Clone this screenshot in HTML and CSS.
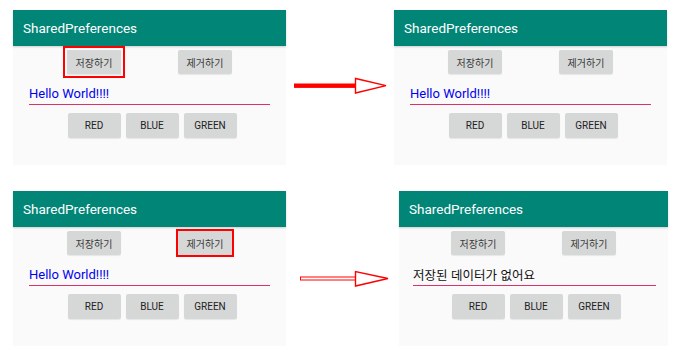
FILE: index.html
```html
<!DOCTYPE html>
<html lang="ko">
<head>
	<meta charset="utf-8" />
	<title>SharedPreferences</title>
	<link rel="stylesheet" href="styles.css">
</head>
<body>
<div class="row">
	<div class="panel">
		<div class="appbar">SharedPreferences</div>
		<div class="actions">
			<button class="btn marked">저장하기</button>
			<button class="btn">제거하기</button>
		</div>
		<div class="field blue">Hello World!!!!</div>
		<div class="colors">
			<button class="cbtn">RED</button>
			<button class="cbtn">BLUE</button>
			<button class="cbtn">GREEN</button>
		</div>
	</div>
	<div class="arrow first">
		<svg width="94" height="18" viewBox="0 0 94 18">
			<rect x="0" y="6.5" width="62" height="4.4" fill="#f00"/>
			<polygon points="61.5,1.5 61.5,16 92,8.6" fill="#fff" stroke="#f00" stroke-width="1.4"/>
		</svg>
	</div>
	<div class="panel">
		<div class="appbar">SharedPreferences</div>
		<div class="actions">
			<button class="btn">저장하기</button>
			<button class="btn">제거하기</button>
		</div>
		<div class="field blue">Hello World!!!!</div>
		<div class="colors">
			<button class="cbtn">RED</button>
			<button class="cbtn">BLUE</button>
			<button class="cbtn">GREEN</button>
		</div>
	</div>
</div>

<div class="row">
	<div class="panel">
		<div class="appbar">SharedPreferences</div>
		<div class="actions">
			<button class="btn">저장하기</button>
			<button class="btn marked tight">제거하기</button>
		</div>
		<div class="field blue">Hello World!!!!</div>
		<div class="colors">
			<button class="cbtn">RED</button>
			<button class="cbtn">BLUE</button>
			<button class="cbtn">GREEN</button>
		</div>
	</div>
	<div class="arrow second">
		<svg width="90" height="18" viewBox="0 0 90 18">
			<rect x="0.5" y="7" width="55" height="3" fill="#fff" stroke="#f00" stroke-width="1"/>
			<polygon points="55.5,1.5 55.5,16 88,8.5" fill="#fff" stroke="#f00" stroke-width="1.4"/>
		</svg>
	</div>
	<div class="panel narrow">
		<div class="appbar">SharedPreferences</div>
		<div class="actions">
			<button class="btn">저장하기</button>
			<button class="btn">제거하기</button>
		</div>
		<div class="field dark">저장된 데이터가 없어요</div>
		<div class="colors">
			<button class="cbtn">RED</button>
			<button class="cbtn">BLUE</button>
			<button class="cbtn">GREEN</button>
		</div>
	</div>
</div>
</body>
</html>
```

FILE: styles.css
```css
body{
	margin: 0;
	padding-top: 10px;
	background: #fff;
	font-family: Roboto, "Noto Sans CJK KR", sans-serif;
}

.row{
	display: flex;
	padding-left: 13px;
}
.row + .row{
	margin-top: 26px;
}

.panel{
	width: 273px;
	height: 155px;
	background: #fafafa;
	display: flex;
	flex-direction: column;
}
.panel.narrow{
	width: 269px;
}

.appbar{
	height: 36px;
	background: #008577;
	color: #fff;
	font-size: 13.5px;
	line-height: 16px;
	padding-left: 10px;
	display: flex;
	align-items: center;
	box-shadow: 0 1px 2px rgba(0,0,0,.18);
}

.actions{
	display: flex;
	justify-content: center;
	gap: 57px;
	margin-top: 4px;
}
.btn{
	width: 54px;
	height: 24px;
	padding: 0;
	border: 0;
	border-radius: 2px;
	background: #d6d7d7;
	box-shadow: 0 1px 1px rgba(0,0,0,.08);
	color: #3a3a3a;
	font-family: "Noto Sans CJK KR", sans-serif;
	font-size: 10px;
}
.btn.marked{
	border-radius: 0;
	outline: 2px solid #f00;
	outline-offset: 2px;
}
.btn.marked.tight{
	outline-offset: 0;
}

.field{
	margin: 0 16px;
	padding: 12px 0 2px;
	line-height: 16px;
	font-size: 13px;
	border-bottom: 1px solid #e0306a;
}
.narrow .field{
	margin: 0 12px 0 14px;
}
.blue{
	color: #0000f0;
}
.dark{
	color: #111;
	font-family: "Noto Sans CJK KR", sans-serif;
	font-size: 12.5px;
}

.colors{
	display: flex;
	justify-content: center;
	gap: 5px;
	margin-top: 8px;
	padding-left: 5px;
}
.cbtn{
	width: 53px;
	height: 25px;
	padding: 0;
	border: 0;
	border-radius: 2px;
	background: #d6d7d7;
	box-shadow: 0 1px 1px rgba(0,0,0,.08);
	color: #222;
	font-family: Roboto, sans-serif;
	font-size: 10px;
}

.arrow{
	display: flex;
	align-items: flex-start;
}
.arrow.first{
	width: 108px;
	padding-top: 67px;
}
.arrow.first svg{
	margin-left: 8px;
}
.arrow.second{
	width: 113px;
	padding-top: 79px;
}
.arrow.second svg{
	margin-left: 14px;
}
```
